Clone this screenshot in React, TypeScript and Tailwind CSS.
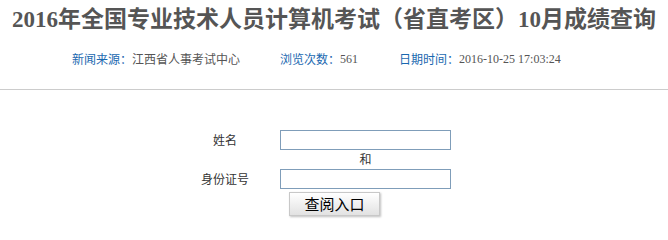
export default function App() {
  return (
    <div className="w-[668px] h-[224px] bg-white overflow-hidden font-['Noto_Sans_CJK_SC',sans-serif]">
      {/* Title */}
      <h1 className="pt-[5px] text-center text-[23px] leading-[29px] font-bold text-[#555] font-['Liberation_Serif','Noto_Sans_CJK_SC',serif]">
        2016年全国专业技术人员计算机考试（省直考区）10月成绩查询
      </h1>

      {/* Meta info */}
      <div className="mt-[16px] flex items-center pl-[72px] text-[12px] leading-[18px]">
        <span className="text-[#1a68b0]">新闻来源：</span>
        <span className="text-[#555]">江西省人事考试中心</span>
        <span className="ml-[40px] text-[#1a68b0]">浏览次数：</span>
        <span className="text-[#555] font-['Liberation_Serif',serif]">561</span>
        <span className="ml-[41px] text-[#1a68b0]">日期时间：</span>
        <span className="text-[#555] font-['Liberation_Serif',serif]">2016-10-25 17:03:24</span>
      </div>

      <div className="mt-[21px] border-t border-[#cccccc]" />

      {/* Query form */}
      <div className="mt-[40px] ml-[170px] flex flex-col text-[12px] text-[#333]">
        <div className="flex items-center h-[19px]">
          <span className="w-[110px] text-center">姓名</span>
          <input className="w-[171px] h-[20px] border border-[#7f9db9] outline-none" />
        </div>
        <div className="flex items-center h-[20px]">
          <span className="w-[110px]" />
          <span className="w-[171px] text-center">和</span>
        </div>
        <div className="flex items-center h-[20px]">
          <span className="w-[110px] text-center">身份证号</span>
          <input className="w-[171px] h-[20px] border border-[#7f9db9] outline-none" />
        </div>
        <div className="mt-[3px] pl-[119px]">
          <button className="w-[91px] h-[24px] border border-[#c8c8c8] bg-gradient-to-b from-white to-[#e2e2e2] shadow-[1px_1px_2px_rgba(0,0,0,0.25)] text-[15px] leading-[20px] text-black">
            查阅入口
          </button>
        </div>
      </div>
    </div>
  );
}
